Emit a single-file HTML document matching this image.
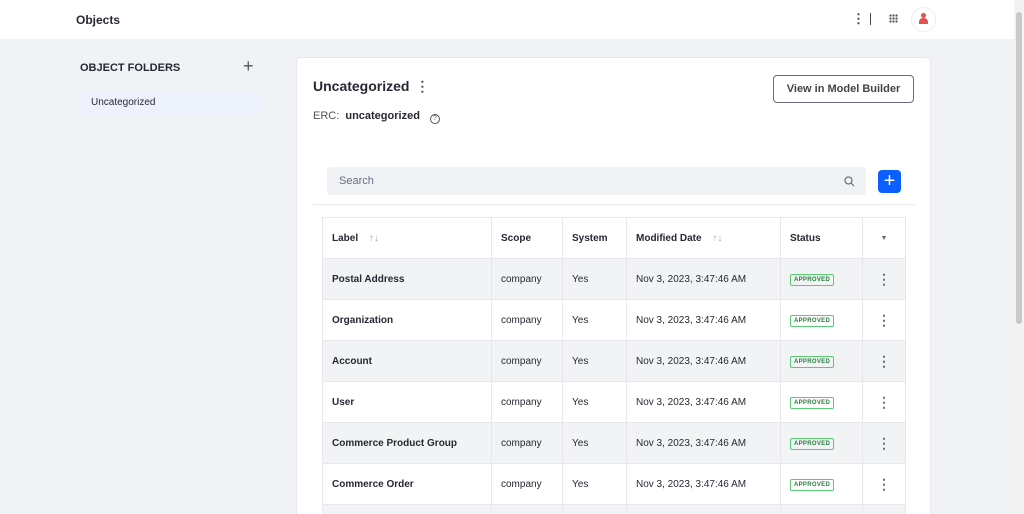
<!DOCTYPE html><html><head><style>
*{box-sizing:border-box;margin:0;padding:0}
html{width:1024px;height:514px;overflow:hidden}
body{width:1024px;height:514px;overflow:hidden;background:#f1f2f5;font-family:"Liberation Sans",sans-serif;color:#272833;position:relative}
.top{position:absolute;left:0;top:0;width:1014px;height:39px;background:#fff}
.sb{position:absolute;right:0;top:0;width:10px;height:514px;background:#f3f3f3}
.sb div{position:absolute;left:2px;top:12px;width:6px;height:312px;background:#c9c9c9;border-radius:3px}
.card{position:absolute;left:296px;top:57px;width:635px;height:457px;background:#fff;border-radius:4px 4px 0 0;border:1px solid #e7e7ed;border-bottom:none}
.clip{position:absolute;left:0;top:0;width:1014px;height:514px;overflow:hidden}
table{position:absolute;left:322px;top:217px;border-collapse:collapse;font-size:10px}
td,th{border:1px solid #e7e7ed;height:41px;padding:0 9px;text-align:left;vertical-align:middle}
th{font-weight:bold;font-size:10px}
tbody tr:nth-child(odd){background:#f2f3f5}
td:first-child{font-weight:bold}
.badge{display:inline-block;border:1px solid #5aca75;color:#287d3c;font-size:6px;font-weight:bold;padding:2px 3px;border-radius:2px;letter-spacing:.3px}
.k{font-size:14px;font-weight:bold;color:#6b6c7e;text-align:center}
.ar{color:#a7a9bc;font-weight:normal;margin-left:8px}
</style></head><body>
<div class="clip">
<div class="top"></div>
<div style="position:absolute;left:76px;top:13px;font-size:12px;font-weight:bold">Objects</div>
<div style="position:absolute;left:852px;top:11px;font-size:13px;font-weight:bold;color:#444">⋮</div>
<div style="position:absolute;left:870px;top:13px;width:1px;height:12px;background:#444"></div>
<div style="position:absolute;left:889px;top:14px;width:9px;height:9px;background:radial-gradient(circle,#555 1px,transparent 1.3px) 0 0/3px 3px"></div>
<div style="position:absolute;left:911px;top:7px;width:25px;height:25px;border-radius:50%;border:1px solid #eee;background:#fff"></div>
<div style="position:absolute;left:921px;top:13px;width:5px;height:5px;border-radius:50%;background:#e2534f"></div>
<div style="position:absolute;left:919px;top:18px;width:9px;height:6px;border-radius:4px 4px 0 0;background:#e2534f"></div>
<div style="position:absolute;left:80px;top:62px;font-size:11px;font-weight:bold">OBJECT FOLDERS</div>
<div style="position:absolute;left:243px;top:56px;font-size:18px;color:#555">+</div>
<div style="position:absolute;left:80px;top:92px;width:180px;height:23px;background:#edf2fc;border-radius:3px;font-size:10px;padding:5px 11px">Uncategorized</div>
<div class="card"></div>
<div style="position:absolute;left:313px;top:78px;font-size:14px;font-weight:bold">Uncategorized <span style="color:#555;margin-left:2px">⋮</span></div>
<div style="position:absolute;left:773px;top:75px;width:141px;height:28px;border:1px solid #6b6c7e;border-radius:4px;font-size:11px;font-weight:bold;color:#444;text-align:center;line-height:26px">View in Model Builder</div>
<div style="position:absolute;left:313px;top:110px;font-size:11px;color:#555">ERC: <b style="color:#272833;margin-left:3px">uncategorized</b><span style="display:inline-block;margin-left:10px;width:10px;height:10px;border:1px solid #555;border-radius:50%;font-size:7px;text-align:center;line-height:8px;vertical-align:-1px">?</span></div>
<div style="position:absolute;left:327px;top:167px;width:539px;height:28px;background:#f1f2f5;border-radius:4px;font-size:11px;color:#6b6c7e;padding:8px 12px">Search
<svg style="position:absolute;right:11px;top:9px" width="11" height="11" viewBox="0 0 11 11"><circle cx="4.5" cy="4.5" r="3.5" fill="none" stroke="#6b6c7e" stroke-width="1.2"/><path d="M7 7l3 3" stroke="#6b6c7e" stroke-width="1.2"/></svg></div>
<div style="position:absolute;left:878px;top:170px;width:23px;height:23px;background:#0b5fff;border-radius:4px;color:#fff;font-size:20px;text-align:center;line-height:22px">+</div>
<div style="position:absolute;left:313px;top:204px;width:602px;height:1px;background:#e7e7ed"></div>
<table>
<colgroup><col style="width:169px"><col style="width:71px"><col style="width:64px"><col style="width:154px"><col style="width:82px"><col style="width:43px"></colgroup>
<thead><tr style="background:#fff"><th>Label <span class="ar">↑↓</span></th><th>Scope</th><th>System</th><th>Modified Date <span class="ar">↑↓</span></th><th>Status</th><th style="text-align:center;color:#6b6c7e;font-size:7px">▼</th></tr></thead>
<tbody>
<tr><td>Postal Address</td><td>company</td><td>Yes</td><td>Nov 3, 2023, 3:47:46 AM</td><td><span class="badge">APPROVED</span></td><td class="k">⋮</td></tr>
<tr><td>Organization</td><td>company</td><td>Yes</td><td>Nov 3, 2023, 3:47:46 AM</td><td><span class="badge">APPROVED</span></td><td class="k">⋮</td></tr>
<tr><td>Account</td><td>company</td><td>Yes</td><td>Nov 3, 2023, 3:47:46 AM</td><td><span class="badge">APPROVED</span></td><td class="k">⋮</td></tr>
<tr><td>User</td><td>company</td><td>Yes</td><td>Nov 3, 2023, 3:47:46 AM</td><td><span class="badge">APPROVED</span></td><td class="k">⋮</td></tr>
<tr><td>Commerce Product Group</td><td>company</td><td>Yes</td><td>Nov 3, 2023, 3:47:46 AM</td><td><span class="badge">APPROVED</span></td><td class="k">⋮</td></tr>
<tr><td>Commerce Order</td><td>company</td><td>Yes</td><td>Nov 3, 2023, 3:47:46 AM</td><td><span class="badge">APPROVED</span></td><td class="k">⋮</td></tr>
<tr><td></td><td></td><td></td><td></td><td></td><td></td></tr>
</tbody></table>
</div>
<div class="sb"><div></div></div>
</body></html>
